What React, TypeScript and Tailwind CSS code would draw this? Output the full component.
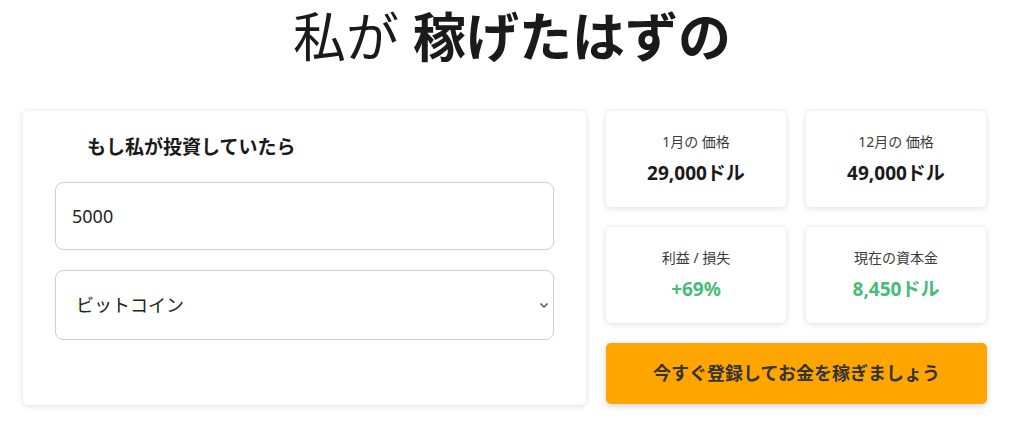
import { useState } from "react";

const font = { fontFamily: '"Noto Sans", "Noto Sans CJK JP", sans-serif' };

function StatCard({ label, value, green }: { label: string; value: string; green?: boolean }) {
  return (
    <div className="flex h-[96px] w-[180px] flex-col items-center justify-center rounded-[5px] bg-white shadow-[0_1px_6px_rgba(0,0,0,0.14)]">
      <p className="text-[14px] leading-[20px] text-[#3a3a3a]">{label}</p>
      <p className={`mt-[8px] text-[19px] font-bold leading-[26px] ${green ? "text-[#48bb78]" : "text-[#1a1a1a]"}`}>
        {value}
      </p>
    </div>
  );
}

export default function App() {
  const [amount, setAmount] = useState("5000");
  const [coin, setCoin] = useState("btc");

  return (
    <div className="min-h-[422px] w-[1024px] bg-white" style={font}>
      <h1 className="pt-[9px] text-center text-[53px] leading-[56px] text-[#1a1a1a]">
        <span className="font-normal">私が </span>
        <span className="font-bold">稼げたはずの</span>
      </h1>

      <div className="mt-[46px] flex gap-[20px] pl-[23px]">
        <div className="h-[294px] w-[563px] rounded-[5px] bg-white px-[32px] pt-[22px] shadow-[0_1px_6px_rgba(0,0,0,0.14)]">
          <h2 className="pl-[32px] text-[19px] font-bold leading-[28px] text-[#1a1a1a]">もし私が投資していたら</h2>
          <input
            value={amount}
            onChange={(e) => setAmount(e.target.value)}
            className="mt-[21px] block h-[68px] w-full rounded-[8px] border border-[#cfcfcf] px-[16px] text-[18px] text-[#222] outline-none"
          />
          <div className="relative mt-[20px]">
            <select
              value={coin}
              onChange={(e) => setCoin(e.target.value)}
              className="block h-[70px] w-full appearance-none rounded-[8px] border border-[#cfcfcf] bg-white px-[20px] text-[18px] text-[#222] outline-none"
            >
              <option value="btc">ビットコイン</option>
              <option value="eth">イーサリアム</option>
            </select>
            <svg
              className="pointer-events-none absolute right-[5px] top-[32px]"
              width="10"
              height="7"
              viewBox="0 0 10 7"
              fill="none"
            >
              <path d="M1.5 1.5 L5 5 L8.5 1.5" stroke="#555" strokeWidth="1.5" />
            </svg>
          </div>
        </div>

        <div className="flex w-[381px] flex-col gap-[20px]">
          <div className="flex gap-[20px]">
            <StatCard label="1月の 価格" value="29,000ドル" />
            <StatCard label="12月の 価格" value="49,000ドル" />
          </div>
          <div className="flex gap-[20px]">
            <StatCard label="利益 / 損失" value="+69%" green />
            <StatCard label="現在の資本金" value="8,450ドル" green />
          </div>
          <button className="h-[61px] w-full rounded-[5px] bg-[#ffa500] text-[18px] font-bold text-[#333] shadow-[0_2px_6px_rgba(0,0,0,0.18)]">
            今すぐ登録してお金を稼ぎましょう
          </button>
        </div>
      </div>
    </div>
  );
}
